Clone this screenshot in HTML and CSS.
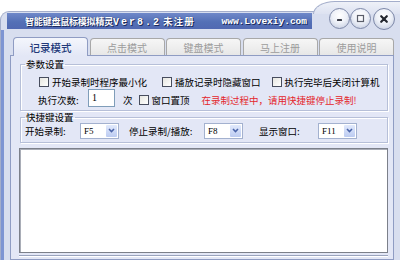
FILE: index.html
```html
<!DOCTYPE html>
<html lang="zh">
<head>
<meta charset="utf-8">
<title>智能键盘鼠标模拟精灵</title>
<link rel="stylesheet" href="styles.css">
</head>
<body>
<div class="window">
  <div class="titlerow">
    <div class="titlebar">
      <span class="title">智能键盘鼠标模拟精灵<span class="ver">Ver8.2</span> <span class="reg">未注册</span></span>
      <span class="site">www.Lovexiy.com</span>
    </div>
    <div class="cap">
      <span class="btn"><svg width="9" height="9" viewBox="0 0 9 9"><rect x="2" y="5" width="5" height="2" rx="0.5" fill="#3a3d48"/></svg></span>
      <span class="btn"><svg width="9" height="9" viewBox="0 0 9 9"><rect x="1.5" y="1.5" width="6" height="6" fill="none" stroke="#5a5e6a" stroke-width="1.2"/></svg></span>
      <span class="btn close"><svg width="10" height="10" viewBox="0 0 10 10"><path d="M2.2 2.2 L7.8 7.8 M7.8 2.2 L2.2 7.8" stroke="#23262e" stroke-width="2.2" stroke-linecap="round"/></svg></span>
    </div>
  </div>
  <div class="main">
    <div class="edge"></div>
    <div class="client">
      <div class="tabs">
        <div class="tab active">记录模式</div>
        <div class="tab">点击模式</div>
        <div class="tab">键盘模式</div>
        <div class="tab">马上注册</div>
        <div class="tab">使用说明</div>
      </div>
      <div class="panel">
        <fieldset class="group g1">
          <legend>参数设置</legend>
          <div class="row r1">
            <label class="chk c1"><span class="box"></span>开始录制时程序最小化</label>
            <label class="chk c2"><span class="box"></span>播放记录时隐藏窗口</label>
            <label class="chk c3"><span class="box"></span>执行完毕后关闭计算机</label>
          </div>
          <div class="row r2">
            <span class="lbl l-times">执行次数:</span>
            <span class="input">1</span>
            <span class="unit">次</span>
            <label class="chk c4"><span class="box"></span>窗口置顶</label>
            <span class="warn">在录制过程中，请用快捷键停止录制!</span>
          </div>
        </fieldset>
        <fieldset class="group g2">
          <legend>快捷键设置</legend>
          <div class="row r3">
            <span class="lbl l-start">开始录制:</span>
            <span class="combo"><span class="val">F5</span><span class="drop"><svg width="7" height="5" viewBox="0 0 7 5"><path d="M1 1 L3.5 3.6 L6 1" stroke="#4a64a8" stroke-width="1.5" fill="none"/></svg></span></span>
            <span class="lbl l-stop">停止录制/播放:</span>
            <span class="combo"><span class="val">F8</span><span class="drop"><svg width="7" height="5" viewBox="0 0 7 5"><path d="M1 1 L3.5 3.6 L6 1" stroke="#4a64a8" stroke-width="1.5" fill="none"/></svg></span></span>
            <span class="lbl l-show">显示窗口:</span>
            <span class="combo"><span class="val">F11</span><span class="drop"><svg width="7" height="5" viewBox="0 0 7 5"><path d="M1 1 L3.5 3.6 L6 1" stroke="#4a64a8" stroke-width="1.5" fill="none"/></svg></span></span>
          </div>
        </fieldset>
        <div class="log"></div>
        <div class="foot"></div>
      </div>
    </div>
  </div>
</div>
</body>
</html>
```
FILE: styles.css
```css
* { box-sizing: border-box; }
html, body { margin: 0; padding: 0; }
body {
  width: 400px;
  height: 260px;
  overflow: hidden;
  background: #fff;
  font-family: "Noto Sans CJK SC", "Noto Sans", sans-serif;
  font-size: 9.5px;
  color: #111;
}
.window {
  margin-top: 11px;
  height: 249px;
  background: #d8deef;
  border-top: 1px solid #a4aecb;
  border-left: 1px solid #a4aecb;
  border-top-left-radius: 9px;
  display: flex;
  flex-direction: column;
}
.titlerow {
  display: flex;
  height: 18px;
  flex: none;
}
.titlebar {
  flex: 1;
  height: 16px;
  margin: 1px 1px 0 6px;
  padding: 0 5px 0 18px;
  background: linear-gradient(#6f88c9, #5470b6 55%, #5169b2);
  display: flex;
  align-items: center;
  justify-content: space-between;
  white-space: nowrap;
}
.title {
  color: #fff;
  font-weight: 700;
  font-size: 9px;
  letter-spacing: -0.2px;
  text-shadow: 1px 1px 0 #1b2a5c, 0 0 1px #1b2a5c;
}
.ver {
  font-family: "Liberation Mono", monospace;
  font-size: 10px;
  letter-spacing: 2px;
}
.reg {
  font-size: 9.5px;
  letter-spacing: 1.2px;
}
.site {
  font-family: "Liberation Mono", monospace;
  font-weight: 700;
  font-size: 9.5px;
  color: #fff;
  text-shadow: 1px 1px 0 #1b2a5c;
}
.cap {
  width: 87px;
  flex: none;
  margin-top: -11px;
  height: 13px;
  border-top: 1px solid #a4aecb;
  border-left: 1px solid #a4aecb;
  border-top-left-radius: 22px 13px;
  background: linear-gradient(#eef1f8, #dde2f1);
  display: flex;
  align-items: flex-start;
  padding: 6px 0 0 15px;
}
.btn {
  width: 21px;
  height: 21px;
  flex: none;
  border-radius: 50%;
  border: 1px solid #7d88a8;
  background: radial-gradient(circle at 50% 35%, #ffffff 0%, #eef1f8 45%, #bcc5db 100%);
  display: flex;
  align-items: center;
  justify-content: center;
}
.btn.close {
  width: 22px;
  height: 22px;
  margin-left: 2px;
}
.main {
  flex: 1;
  display: flex;
  min-height: 0;
}
.edge {
  width: 3px;
  flex: none;
  background: #7e95d3;
}
.client {
  flex: 1;
  padding: 7px 6px 0 6px;
  display: flex;
  flex-direction: column;
  min-height: 0;
}
.tabs {
  display: flex;
  align-items: flex-end;
  height: 19px;
  flex: none;
  gap: 1.5px;
  padding-left: 3px;
  margin-bottom: -1px;
  position: relative;
  z-index: 1;
}
.tab {
  width: 75px;
  height: 17px;
  flex: none;
  margin-bottom: 1px;
  border: 1px solid #a8a8a8;
  border-bottom: none;
  border-radius: 4px 4px 0 0;
  background: linear-gradient(#f6f6f6, #e7e7e7);
  color: #9c9c9c;
  font-size: 10px;
  display: flex;
  align-items: center;
  justify-content: center;
}
.tab.active {
  height: 19px;
  margin-bottom: 0;
  border-color: #8f9cc3;
  background: linear-gradient(#f4f6fc, #e3e7f6);
  color: #22397a;
  font-size: 10.5px;
  font-weight: 500;
}
.panel {
  flex: 1;
  border: 1px solid #8f9cc3;
  background: #e3e7f6;
  padding: 0 5px 0 9px;
  display: flex;
  flex-direction: column;
  min-height: 0;
}
fieldset {
  margin: 0;
  padding: 0;
  min-width: 0;
  border: 1px solid #b6bfd8;
  box-shadow: inset 1px 1px 0 #fff, 1px 1px 0 #fff;
}
legend {
  margin-left: 4px;
  padding: 0 1px;
  font-size: 9.5px;
  color: #000;
}
.g1 { margin-top: 1px; }
.g1 legend { line-height: 14px; }
.g2 legend { line-height: 12px; }
.row {
  display: flex;
  align-items: center;
  white-space: nowrap;
  color: #000;
}
.r1 { height: 17px; margin-top: 2px; }
.r2 { height: 20px; }
.r3 { height: 17px; margin-top: -1px; margin-bottom: 3px; }
.chk {
  display: flex;
  align-items: center;
  gap: 3px;
}
.box {
  width: 10px;
  height: 10px;
  flex: none;
  border: 1px solid #474d5e;
  background: linear-gradient(135deg, #e6e6e0, #ffffff);
}
.c1 { margin-left: 18px; }
.c2 { margin-left: 15px; }
.c3 { margin-left: 11px; }
.lbl { flex: none; }
.l-times { width: 50px; margin-left: 17px; }
.input {
  width: 27px;
  height: 18px;
  margin-bottom: 4px;
  border: 1px solid #7f9db9;
  background: #fff;
  font-family: "Liberation Serif", serif;
  font-size: 10px;
  padding-left: 3px;
  line-height: 16px;
}
.unit { margin-left: 8px; }
.c4 { margin-left: 6px; }
.warn {
  margin-left: 12px;
  color: #e3262c;
}
.l-start { width: 55px; margin-left: 4px; }
.l-stop { width: 75px; margin-left: 10px; }
.l-show { width: 59px; margin-left: 16px; }
.combo {
  width: 39px;
  height: 16px;
  flex: none;
  border: 1px solid #a3b1cf;
  background: #fff;
  display: flex;
  align-items: stretch;
  padding: 1px;
}
.val {
  flex: 1;
  font-family: "Liberation Serif", serif;
  font-size: 9px;
  line-height: 12px;
  padding-left: 2px;
}
.drop {
  width: 11px;
  flex: none;
  background: linear-gradient(#e1e9fc, #bccbf1);
  border-radius: 1px;
  display: flex;
  align-items: center;
  justify-content: center;
}
.log {
  margin-top: 5px;
  margin-left: -1px;
  height: 105px;
  flex: none;
  border: 1px solid #7c808a;
  box-shadow: inset 1px 1px 0 #a9adb7;
  background: #fff;
}
.foot {
  margin-top: 2px;
  margin-left: -1px;
  height: 6px;
  flex: none;
  border-top: 1px solid #9aa3bd;
  box-shadow: inset 0 1px 0 #fff;
}
```
